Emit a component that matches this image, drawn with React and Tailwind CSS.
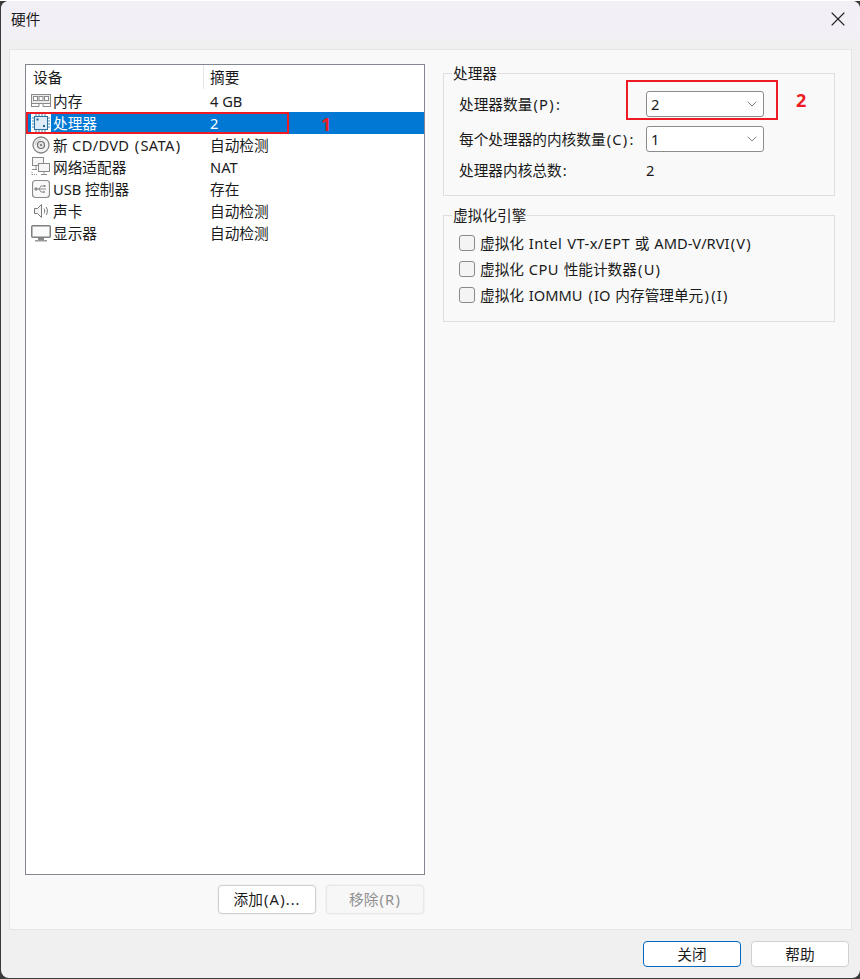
import { ChevronDown, X } from 'lucide-react';

const font = { fontFamily: '"Noto Sans", "Noto Sans CJK SC", sans-serif' };

function MemoryIcon() {
  return (
    <svg width="20" height="16" viewBox="0 0 20 16" fill="none" stroke="#8a8a8a">
      <rect x="0.5" y="1.5" width="19" height="9" fill="#ececec" />
      <rect x="2.5" y="3.500" width="4" height="4" fill="#fff" stroke="#8a8a8a" />
      <rect x="8" y="3.500" width="4" height="4" fill="#fff" stroke="#8a8a8a" />
      <rect x="13.5" y="3.500" width="4" height="4" fill="#fff" stroke="#8a8a8a" />
      <path d="M0.5 13.500h7.500v-3M19.500 13.500h-7.500v-3M0.500 10v4M19.500 10v4" />
    </svg>
  );
}

function CpuIcon() {
  return (
    <svg width="20" height="20" viewBox="0 0 20 20" fill="none">
      <rect width="20" height="20" fill="#fff" />
      <rect x="3.5" y="3.5" width="13" height="13" fill="#dcebf7" stroke="#2a6f9e" />
      <rect x="5.5" y="5.5" width="2" height="2" fill="#1d5f8f" />
      <rect x="12" y="12" width="2" height="2" fill="#1d5f8f" />
      <path
        d="M1 5h2M1 8h2M1 11h2M1 14h2M17 5h2M17 8h2M17 11h2M17 14h2M5 1v2M8 1v2M11 1v2M14 1v2M5 17v2M8 17v2M11 17v2M14 17v2"
        stroke="#3d86b8"
      />
    </svg>
  );
}

function DiscIcon() {
  return (
    <svg width="18" height="18" viewBox="0 0 18 18" fill="none">
      <circle cx="9" cy="9" r="8" fill="#f2f2f2" stroke="#858585" strokeWidth="1.3" />
      <circle cx="9" cy="9" r="3.5" fill="#e4e4e4" stroke="#6f6f6f" strokeWidth="1.2" />
      <circle cx="9" cy="9" r="1.1" fill="#6f6f6f" />
      <path d="M9 3.500a5.500 5.500 0 0 0-5.500 5.500" stroke="#bdbdbd" />
    </svg>
  );
}

function NetworkIcon() {
  return (
    <svg width="20" height="20" viewBox="0 0 20 20" fill="none" stroke="#8a8a8a">
      <rect x="1.5" y="0.5" width="11" height="8" fill="#f6f6f6" />
      <rect x="7.5" y="6.5" width="11" height="8" fill="#f6f6f6" />
      <path d="M13 14.500v2M10 17.500h6M5 9v3M1 12.500h5" />
      <path d="M1 17.500h5M1 15v3" strokeDasharray="1 1" />
    </svg>
  );
}

function UsbIcon() {
  return (
    <svg width="18" height="20" viewBox="0 0 18 20" fill="none" stroke="#8a8a8a">
      <rect x="0.5" y="1.5" width="17" height="17" rx="3" fill="#f8f8f8" strokeWidth="1.2" />
      <path d="M4 10h10M7 10l2-3h2.500M7 10l2 3h2" />
      <circle cx="4" cy="10" r="1.2" fill="#8a8a8a" />
      <rect x="11.5" y="6" width="2" height="2" fill="#8a8a8a" stroke="none" />
      <circle cx="12" cy="13" r="1" fill="#8a8a8a" stroke="none" />
    </svg>
  );
}

function SoundIcon() {
  return (
    <svg width="16" height="16" viewBox="0 0 16 16" fill="none" stroke="#7a7a7a">
      <path d="M1.500 5.500h3l4-4v13l-4-4h-3z" fill="#f6f6f6" />
      <path d="M11 5.500c1 1.500 1 3.500 0 5M13.200 4c1.600 2.400 1.600 5.600 0 8" />
    </svg>
  );
}

function MonitorIcon() {
  return (
    <svg width="20" height="18" viewBox="0 0 20 18" fill="none">
      <rect x="0.75" y="1.75" width="18.500" height="11.500" rx="1" fill="#fafafa" stroke="#7f7f7f" strokeWidth="1.5" />
      <rect x="7" y="14" width="6" height="2" fill="#8a8a8a" />
      <rect x="4" y="16" width="12" height="1.500" fill="#9a9a9a" />
    </svg>
  );
}

// the reference's brackets and colons sit wider than this font's, so pad them
function Label({ text }) {
  return text.split(/([():])/).map((part, i) =>
    /^[():]$/.test(part) ? (
      <span key={i} className="px-[1.2px]">{part}</span>
    ) : (
      part
    ),
  );
}

const devices = [
  { icon: <MemoryIcon />, name: '内存', summary: '4 GB' },
  { icon: <CpuIcon />, name: '处理器', summary: '2', selected: true },
  { icon: <DiscIcon />, name: '新 CD/DVD (SATA)', summary: '自动检测', wide: true },
  { icon: <NetworkIcon />, name: '网络适配器', summary: 'NAT' },
  { icon: <UsbIcon />, name: 'USB 控制器', summary: '存在' },
  { icon: <SoundIcon />, name: '声卡', summary: '自动检测' },
  { icon: <MonitorIcon />, name: '显示器', summary: '自动检测' },
];

function DeviceRow({ device }) {
  return (
    <div className={`flex h-[22px] items-center ${device.selected ? 'bg-[#0078d4] text-white' : 'text-[#1a1a1a]'}`}>
      <span className="flex w-[27px] shrink-0 justify-center pl-[3px]">{device.icon}</span>
      <span className={`w-[157px] shrink-0 whitespace-nowrap ${device.wide ? 'tracking-[0.3px]' : ''}`}>
        <Label text={device.name} />
      </span>
      <span className="whitespace-nowrap">{device.summary}</span>
    </div>
  );
}

function GroupBox({ title, className, children }) {
  return (
    <div className={`relative border border-[#dfdfdf] ${className}`}>
      <span className="absolute left-[8px] top-[-11px] bg-[#f9f9f9] px-px leading-[20px] text-[#1a1a1a]">{title}</span>
      {children}
    </div>
  );
}

function Combo({ value }) {
  return (
    <div className="flex h-[26px] w-[118px] items-center justify-between rounded-[3px] border border-[#8c8c8c] bg-white pl-[4px] pr-[3px]">
      <span>{value}</span>
      <ChevronDown size={16} strokeWidth={1.1} color="#555" />
    </div>
  );
}

function CheckRow({ children }) {
  return (
    <div className="flex h-[26px] items-center gap-[5px]">
      <span className="h-[16px] w-[16px] shrink-0 rounded-[3px] border border-[#8a8a8a] bg-[#f4f4f4]" />
      <span className="whitespace-nowrap [word-spacing:1px]">{children}</span>
    </div>
  );
}

function Button({ children, className }) {
  return (
    <div className={`flex w-[98px] items-center justify-center rounded-[4px] border ${className}`}>{children}</div>
  );
}

export default function App() {
  return (
    <div className="h-[979px] w-[860px] bg-[#3a3a3a] text-[14.67px] leading-[20px]" style={font}>
      <div className="relative ml-px mt-px flex h-[977px] w-[859px] flex-col overflow-hidden rounded-[8px] bg-[#f0f0f0] text-[#1a1a1a]">
        <div className="flex h-[38px] shrink-0 items-center justify-between bg-[#f3eff6] pb-[2px] pl-[10px] pr-[10px]">
          <span>硬件</span>
          <X size={24} strokeWidth={1.1} color="#222" />
        </div>

        <div className="mx-[8px] mt-[10px] flex h-[881px] border border-[#e5e5e5] bg-[#f9f9f9] pt-[14px]">
          <div className="ml-[15px] flex w-[400px] shrink-0 flex-col">
            <div className="h-[811px] border border-[#828790] bg-white">
              <div className="flex h-[25px] items-center pb-[2px] text-[#1a1a1a]">
                <span className="w-[177px] pl-[7px]">设备</span>
                <span className="h-[24px] w-px self-start bg-[#e5e5e5]" />
                <span className="pl-[6px]">摘要</span>
              </div>
              {devices.map((device) => (
                <DeviceRow key={device.name} device={device} />
              ))}
            </div>
            <div className="mr-px mt-[10px] flex h-[29px] justify-end gap-[10px]">
              <Button className="border-[#d0d0d0] bg-white pb-[2px] ring-1 ring-[#f2f2f2]">
                <Label text="添加(A)" />
                <span className="tracking-[1px]">...</span>
              </Button>
              <Button className="border-[#e8e8e8] bg-[#f7f7f7] pb-[2px] text-[#8f8f8f] ring-1 ring-[#f2f2f2]">
                <Label text="移除(R)" />
              </Button>
            </div>
          </div>

          <div className="ml-[18px] w-[392px] shrink-0 pt-[9px]">
            <GroupBox title="处理器" className="h-[123px] pl-[15px] pt-[17px]">
              <div className="flex h-[26px] items-center">
                <span className="w-[187px] whitespace-nowrap"><Label text="处理器数量(P):" /></span>
                <Combo value="2" />
              </div>
              <div className="mt-[9px] flex h-[26px] items-center">
                <span className="w-[187px] whitespace-nowrap"><Label text="每个处理器的内核数量(C):" /></span>
                <Combo value="1" />
              </div>
              <div className="mt-[5px] flex h-[26px] items-center">
                <span className="w-[187px] whitespace-nowrap"><Label text="处理器内核总数:" /></span>
                <span>2</span>
              </div>
            </GroupBox>
            <GroupBox title="虚拟化引擎" className="mt-[19px] h-[107px] pl-[15px] pt-[14px]">
              <CheckRow>
                虚拟化 <span className="tracking-[0.4px]">Intel VT-x/EPT</span> 或 <Label text="AMD-V/RVI(V)" />
              </CheckRow>
              <CheckRow>
                虚拟化 <span className="tracking-[0.4px]">CPU</span> 性能计数器<Label text="(U)" />
              </CheckRow>
              <CheckRow>
                <Label text="虚拟化 IOMMU (IO 内存管理单元)(I)" />
              </CheckRow>
            </GroupBox>
          </div>
        </div>

        <div className="mt-[11px] flex h-[26px] justify-end gap-[10px] pr-[11px]">
          <Button className="border-[#0067c0] bg-white">关闭</Button>
          <Button className="border-[#d0d0d0] bg-white">帮助</Button>
        </div>

        {/* red annotations on top of the screenshot */}
        <div className="absolute left-[25px] top-[111px] h-[22px] w-[263px] border-2 border-[#ed1c24]" />
        <span className="absolute left-[320px] top-[113px] text-[18px] font-bold text-[#ed1c24]">1</span>
        <div className="absolute left-[625px] top-[79px] h-[40px] w-[152px] border-2 border-[#ed1c24]" />
        <span className="absolute left-[795px] top-[89px] text-[18px] font-bold text-[#ed1c24]">2</span>
      </div>
    </div>
  );
}
